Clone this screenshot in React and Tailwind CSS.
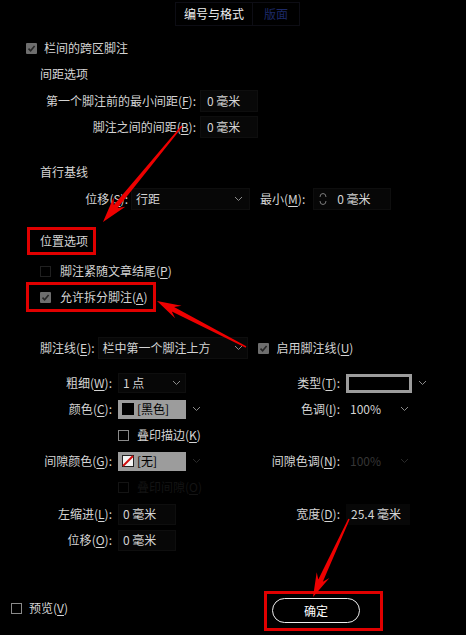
import React from "react";

function arrowPoints(tx, ty, px, py, headLen, headW, tailW, neckW) {
  const dx = px - tx, dy = py - ty;
  const L = Math.hypot(dx, dy);
  const ux = dx / L, uy = dy / L;
  const nx = -uy, ny = ux;
  const bx = px - ux * headLen, by = py - uy * headLen;
  const jx = bx + ux * 6, jy = by + uy * 6;
  const p = [
    [tx + (nx * tailW) / 2, ty + (ny * tailW) / 2],
    [jx + (nx * neckW) / 2, jy + (ny * neckW) / 2],
    [bx + (nx * headW) / 2, by + (ny * headW) / 2],
    [px, py],
    [bx - (nx * headW) / 2, by - (ny * headW) / 2],
    [jx - (nx * neckW) / 2, jy - (ny * neckW) / 2],
    [tx - (nx * tailW) / 2, ty - (ny * tailW) / 2],
  ];
  return p.map((q) => q[0].toFixed(1) + "," + q[1].toFixed(1)).join(" ");
}

function K({ t, k, colon = true }) {
  return (
    <span className="whitespace-nowrap">
      {t}(<span className="underline underline-offset-2">{k}</span>){colon ? ":" : ""}
    </span>
  );
}

function Chevron({ color = "#8a8a8a" }) {
  return (
    <svg width="9" height="6" viewBox="0 0 9 6" className="shrink-0">
      <path d="M1 1 L4.5 4.5 L8 1" fill="none" stroke={color} strokeWidth="1" />
    </svg>
  );
}

function Check({ checked, border = "#2a2a2a" }) {
  if (checked) {
    return (
      <div className="w-[11px] h-[11px] bg-[#6e6e6e] rounded-[1px] flex items-center justify-center shrink-0">
        <svg width="9" height="9" viewBox="0 0 9 9">
          <path d="M1.5 4.6 L3.6 6.8 L7.6 2" fill="none" stroke="#262626" strokeWidth="1.6" />
        </svg>
      </div>
    );
  }
  return <div className="w-[11px] h-[11px] border shrink-0" style={{ borderColor: border }} />;
}

export default function App() {
  return (
    <div className="relative w-[466px] h-[635px] bg-black overflow-hidden text-[12px] leading-none text-[#d4d4d4] font-['Noto_Sans_CJK_SC','Noto_Sans',sans-serif]">
      <div className="flex flex-col">
        {/* Tabs */}
        <div className="mt-[2px] h-[24px] flex pl-[175px]">
          <div className="w-[78px] h-full flex items-center justify-center border border-[#0d0d14] text-[#f0f0f0]">
            编号与格式
          </div>
          <div className="w-[47px] h-full flex items-center justify-center border border-l-0 border-[#0d0d14] text-[#1d2a68]">
            版面
          </div>
        </div>

        {/* 栏间的跨区脚注 */}
        <div className="mt-[9px] h-[26px] flex items-center pl-[26px] gap-[7px]">
          <Check checked />
          <span>栏间的跨区脚注</span>
        </div>

        <div className="h-[26px] flex items-center pl-[40px]">间距选项</div>

        <div className="mt-[1px] h-[26px] flex items-center">
          <div className="w-[196px] text-right">
            <K t="第一个脚注前的最小间距" k="F" />
          </div>
          <div className="ml-[4px] w-[58px] h-[22px] bg-[#080808] border border-[#0e0e0e] flex items-center pl-[6px]">
            0 毫米
          </div>
        </div>

        <div className="h-[26px] flex items-center">
          <div className="w-[196px] text-right">
            <K t="脚注之间的间距" k="B" />
          </div>
          <div className="ml-[4px] w-[58px] h-[22px] bg-[#080808] border border-[#0e0e0e] flex items-center pl-[6px]">
            0 毫米
          </div>
        </div>

        <div className="mt-[19px] h-[26px] flex items-center pl-[40px]">首行基线</div>

        <div className="mt-[1px] h-[26px] flex items-center">
          <div className="w-[128px] text-right">
            <K t="位移" k="S" />
          </div>
          <div className="ml-[3px] w-[119px] h-[22px] bg-[#070707] border border-[#0e0e0e] flex items-center justify-between pl-[4px] pr-[6px]">
            <span>行距</span>
            <Chevron />
          </div>
          <div className="ml-[10px]">
            <K t="最小" k="M" />
          </div>
          <div className="ml-[8px] w-[78px] h-[22px] bg-[#070707] border border-[#0e0e0e] flex items-center pl-[5px] gap-[10px]">
            <svg width="8" height="14" viewBox="0 0 8 14" className="shrink-0">
              <path d="M1 5 Q1 1.5 4 1.5 Q7 1.5 7 5" fill="none" stroke="#7a7a7a" strokeWidth="1" />
              <path d="M1 9 Q1 12.5 4 12.5 Q7 12.5 7 9" fill="none" stroke="#7a7a7a" strokeWidth="1" />
            </svg>
            <span>0 毫米</span>
          </div>
        </div>

        {/* 位置选项 */}
        <div className="mt-[15px] ml-[27px] w-[69px] h-[28px] border-[3px] border-[#e00000] flex items-center pl-[10px]">
          位置选项
        </div>

        <div className="mt-[5px] h-[22px] flex items-center pl-[40px] gap-[9px]">
          <Check border="#202020" />
          <K t="脚注紧随文章结尾" k="P" colon={false} />
        </div>

        <div className="ml-[26px] w-[130px] h-[30px] border-[3px] border-[#e00000] flex items-center pl-[11px] gap-[9px]">
          <Check checked />
          <K t="允许拆分脚注" k="A" colon={false} />
        </div>

        {/* 脚注线 */}
        <div className="mt-[23px] h-[26px] flex items-center pl-[40px]">
          <K t="脚注线" k="E" />
          <div className="ml-[3px] w-[150px] h-[22px] bg-[#070707] border border-[#0e0e0e] flex items-center justify-between pl-[4px] pr-[4px]">
            <span>栏中第一个脚注上方</span>
            <Chevron />
          </div>
          <div className="ml-[10px] flex items-center gap-[8px]">
            <Check checked />
            <K t="启用脚注线" k="U" colon={false} />
          </div>
        </div>

        {/* Grid rows */}
        <div className="mt-[9px] h-[26px] flex items-center">
          <div className="w-[112px] text-right"><K t="粗细" k="W" /></div>
          <div className="ml-[6px] w-[110px] flex items-center">
            <div className="w-[68px] h-[20px] bg-[#070707] border border-[#0e0e0e] flex items-center justify-between pl-[4px] pr-[4px]">
              <span>1 点</span>
              <Chevron />
            </div>
          </div>
          <div className="w-[112px] text-right"><K t="类型" k="T" /></div>
          <div className="ml-[6px] flex items-center gap-[6px]">
            <div className="w-[66px] h-[19px] bg-[#9c9c9c] p-[3px]">
              <div className="w-full h-full bg-black" />
            </div>
            <Chevron />
          </div>
        </div>

        <div className="h-[26px] flex items-center">
          <div className="w-[112px] text-right"><K t="颜色" k="C" /></div>
          <div className="ml-[6px] w-[110px] flex items-center">
            <div className="w-[68px] h-[19px] bg-[#9c9c9c] flex items-center pl-[4px] gap-[3px] text-black">
              <div className="w-[12px] h-[12px] bg-black" />
              <span>[黑色]</span>
            </div>
            <div className="w-[20px] flex justify-center">
              <Chevron />
            </div>
          </div>
          <div className="w-[112px] text-right"><K t="色调" k="I" /></div>
          <div className="ml-[6px] w-[66px] h-[20px] flex items-center justify-between pl-[4px] pr-[3px]">
            <span>100%</span>
            <Chevron />
          </div>
        </div>

        <div className="h-[26px] flex items-center pl-[118px] gap-[8px]">
          <Check border="#8a8a8a" />
          <K t="叠印描边" k="K" colon={false} />
        </div>

        <div className="h-[26px] flex items-center">
          <div className="w-[112px] text-right"><K t="间隙颜色" k="G" /></div>
          <div className="ml-[6px] w-[110px] flex items-center">
            <div className="w-[68px] h-[19px] bg-[#9c9c9c] flex items-center pl-[4px] gap-[3px] text-black">
              <svg width="12" height="12" viewBox="0 0 12 12" className="shrink-0">
                <rect x="0.5" y="0.5" width="11" height="11" fill="#f4f4f4" stroke="#222" />
                <path d="M1 11 L11 1" stroke="#d01010" strokeWidth="2" />
              </svg>
              <span>[无]</span>
            </div>
            <div className="w-[20px] flex justify-center">
              <Chevron color="#2a2a2a" />
            </div>
          </div>
          <div className="w-[112px] text-right"><K t="间隙色调" k="N" /></div>
          <div className="ml-[6px] w-[66px] h-[20px] flex items-center justify-between pl-[4px] pr-[3px] text-[#363636]">
            <span>100%</span>
            <Chevron color="#2a2a2a" />
          </div>
        </div>

        <div className="h-[26px] flex items-center pl-[118px] gap-[8px] text-[#141414]">
          <Check border="#141414" />
          <K t="叠印间隙" k="O" colon={false} />
        </div>

        <div className="mt-[1px] h-[26px] flex items-center">
          <div className="w-[112px] text-right"><K t="左缩进" k="L" /></div>
          <div className="ml-[6px] w-[110px] flex items-center">
            <div className="w-[58px] h-[21px] bg-[#070707] border border-[#0e0e0e] flex items-center pl-[4px]">0 毫米</div>
          </div>
          <div className="w-[112px] text-right"><K t="宽度" k="D" /></div>
          <div className="ml-[6px] w-[64px] h-[21px] bg-[#070707] flex items-center pl-[5px]">25.4 毫米</div>
        </div>

        <div className="h-[26px] flex items-center">
          <div className="w-[112px] text-right"><K t="位移" k="O" /></div>
          <div className="ml-[6px] w-[110px] flex items-center">
            <div className="w-[58px] h-[21px] bg-[#070707] border border-[#0e0e0e] flex items-center pl-[4px]">0 毫米</div>
          </div>
        </div>

        {/* Bottom */}
        <div className="mt-[38px] h-[40px] flex items-center">
          <div className="pl-[11px] mb-[6px] flex items-center gap-[7px]">
            <Check border="#8a8a8a" />
            <K t="预览" k="V" colon={false} />
          </div>
          <div className="ml-auto mr-[83px] w-[119px] h-[40px] border-[3px] border-[#e00000] pl-[5px] pt-[4px]">
            <div className="w-[88px] h-[25px] rounded-full border-[1.5px] border-[#eeeeee] flex items-center justify-center text-white">
              确定
            </div>
          </div>
        </div>
      </div>

      {/* Annotation arrows */}
      <svg className="absolute inset-0 pointer-events-none" width="466" height="635" viewBox="0 0 466 635">
        <polygon points={arrowPoints(182, 126, 103, 222, 26, 15, 1.5, 5)} fill="#ee0000" />
        <polygon points={arrowPoints(246, 347, 157, 301, 24, 14, 1.5, 5)} fill="#ee0000" />
        <polygon points={arrowPoints(349, 519, 313, 597, 24, 14, 1.5, 5)} fill="#ee0000" />
      </svg>
    </div>
  );
}
